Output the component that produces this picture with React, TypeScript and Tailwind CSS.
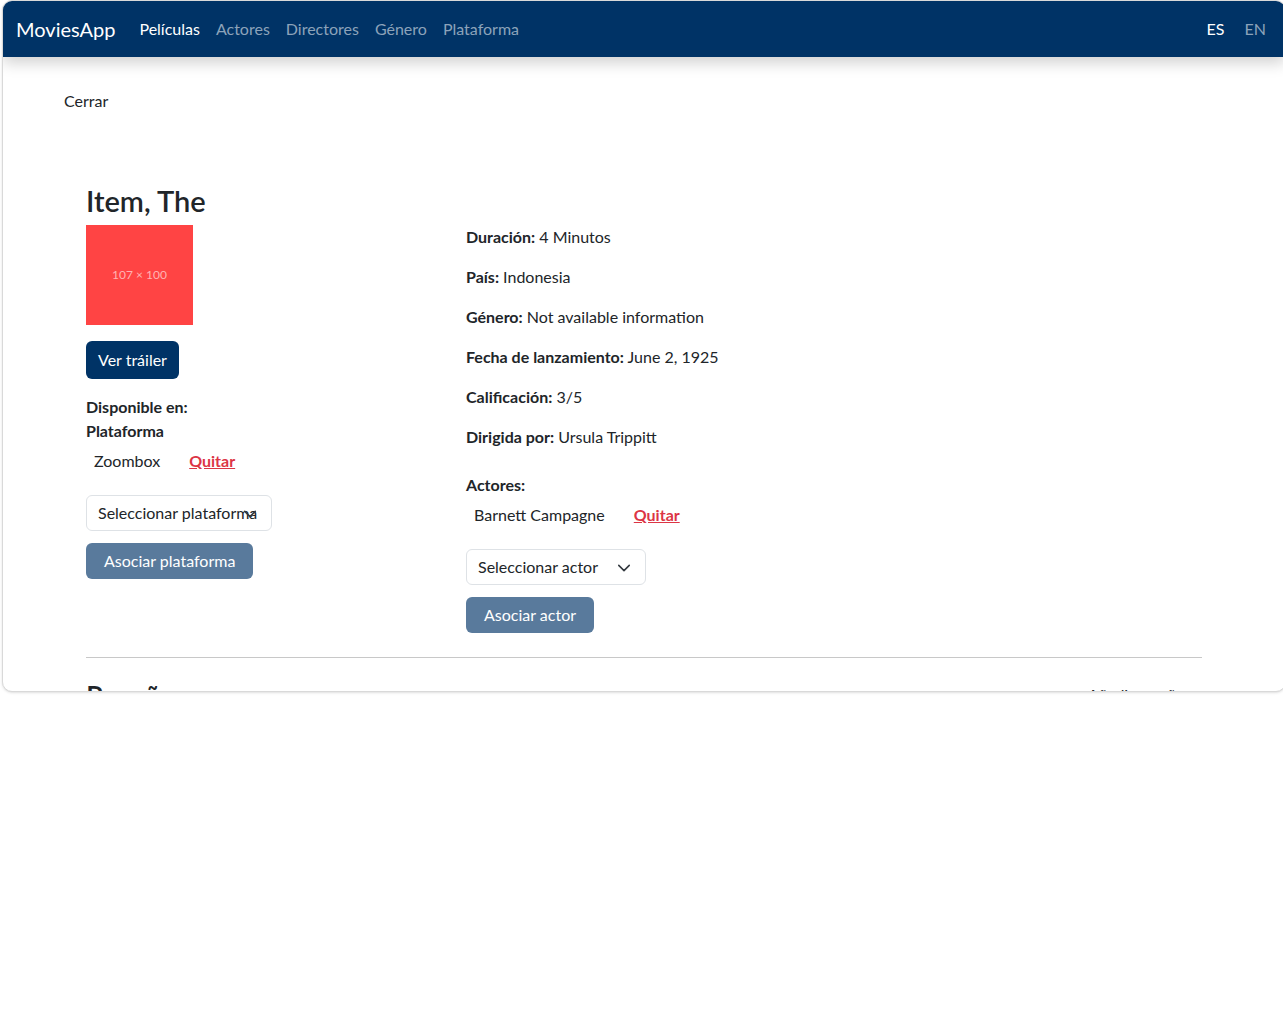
import React from "react";

const Chevron = () => (
  <svg width="14" height="14" viewBox="0 0 16 16" fill="none">
    <path d="m2 5 6 6 6-6" stroke="#343a40" strokeWidth="1.8" strokeLinecap="round" strokeLinejoin="round" />
  </svg>
);

function Select({ label, w }: { label: string; w: string }) {
  return (
    <div className={`relative h-[36px] ${w} rounded-[6px] border border-[#dee2e6] bg-white flex items-center pl-[11px] text-[16px] text-[#212529] whitespace-nowrap overflow-hidden`}>
      <span>{label}</span>
      <span className="absolute right-[14px] top-[11px]">
        <Chevron />
      </span>
    </div>
  );
}

export default function App() {
  const font = { fontFamily: "Lato, 'Noto Sans', sans-serif" };
  return (
    <div className="w-full h-[1024px] overflow-hidden bg-white" style={font}>
      <div className="ml-[2px] w-[1284px] h-[692px] rounded-[10px] border border-[#d9d9d9] overflow-hidden shadow-sm bg-white">
        <nav className="h-[56px] bg-[#003366] flex items-center pl-[13px] pr-[19px] shadow-[0_6px_14px_rgba(0,0,0,0.18)] relative z-10">
          <span className="text-white text-[20px] mr-[16px]">MoviesApp</span>
          <div className="flex text-[16px]">
            <span className="px-[8px] text-white">Películas</span>
            <span className="px-[8px] text-[#8ca3ba]">Actores</span>
            <span className="px-[8px] text-[#8ca3ba]">Directores</span>
            <span className="px-[8px] text-[#8ca3ba]">Género</span>
            <span className="px-[8px] text-[#8ca3ba]">Plataforma</span>
          </div>
          <div className="ml-auto flex text-[16px] gap-[20px]">
            <span className="text-white">ES</span>
            <span className="text-[#8ca3ba]">EN</span>
          </div>
        </nav>
        <div className="text-[#212529]">
          <div className="pl-[61px] pt-[33px] text-[16px] leading-[22px]">Cerrar</div>
          <div className="w-[1116px] mx-auto mt-[72px]">
            <h2 className="text-[29px] font-semibold leading-[34px]">Item, The</h2>
            <div className="flex mt-[7px]">
              <div className="w-[380px] flex flex-col items-start">
                <div className="w-[107px] h-[100px] bg-[#ff4444] flex items-center justify-center text-[12px] text-[#ffb3b3]">
                  107 × 100
                </div>
                <button className="mt-[16px] h-[38px] px-[12px] rounded-[6px] bg-[#003366] text-white text-[16px]">
                  Ver tráiler
                </button>
                <div className="mt-[16px] font-bold text-[16px] leading-[24px]">Disponible en:</div>
                <div className="font-bold text-[16px] leading-[24px]">Plataforma</div>
                <div className="flex items-center mt-[6px] text-[16px] leading-[24px]">
                  <span className="pl-[8px]">Zoombox</span>
                  <span className="ml-[29px] text-[#dc3545] font-bold underline">Quitar</span>
                </div>
                <div className="mt-[22px]">
                  <Select label="Seleccionar plataforma" w="w-[186px]" />
                </div>
                <button className="mt-[12px] h-[36px] px-[18px] rounded-[6px] bg-[#597a9c] text-white text-[16px]">
                  Asociar plataforma
                </button>
              </div>
              <div className="flex-1 text-[16px]">
                <div className="flex flex-col gap-[16px] leading-[24px]">
                  <div><b>Duración:</b> 4 Minutos</div>
                  <div><b>País:</b> Indonesia</div>
                  <div><b>Género:</b> Not available information</div>
                  <div><b>Fecha de lanzamiento:</b> June 2, 1925</div>
                  <div><b>Calificación:</b> 3/5</div>
                  <div><b>Dirigida por:</b> Ursula Trippitt</div>
                </div>
                <div className="mt-[24px] font-bold leading-[24px]">Actores:</div>
                <div className="flex items-center mt-[6px] text-[16px] leading-[24px]">
                  <span className="pl-[8px]">Barnett Campagne</span>
                  <span className="ml-[29px] text-[#dc3545] font-bold underline">Quitar</span>
                </div>
                <div className="mt-[22px]">
                  <Select label="Seleccionar actor" w="w-[180px]" />
                </div>
                <button className="mt-[12px] h-[36px] px-[18px] rounded-[6px] bg-[#597a9c] text-white text-[16px]">
                  Asociar actor
                </button>
              </div>
            </div>
            <hr className="mt-[24px] border-t border-[#c8c8c8]" />
            <div className="flex items-start justify-between mt-[21px]">
              <h3 className="text-[28px] font-semibold leading-[34px]">Reseñas</h3>
              <span className="text-[16px] mr-[18px] mt-[4px]"><span className="text-[#e8590c]">+</span> Añadir reseña</span>
            </div>
          </div>
        </div>
      </div>
    </div>
  );
}
